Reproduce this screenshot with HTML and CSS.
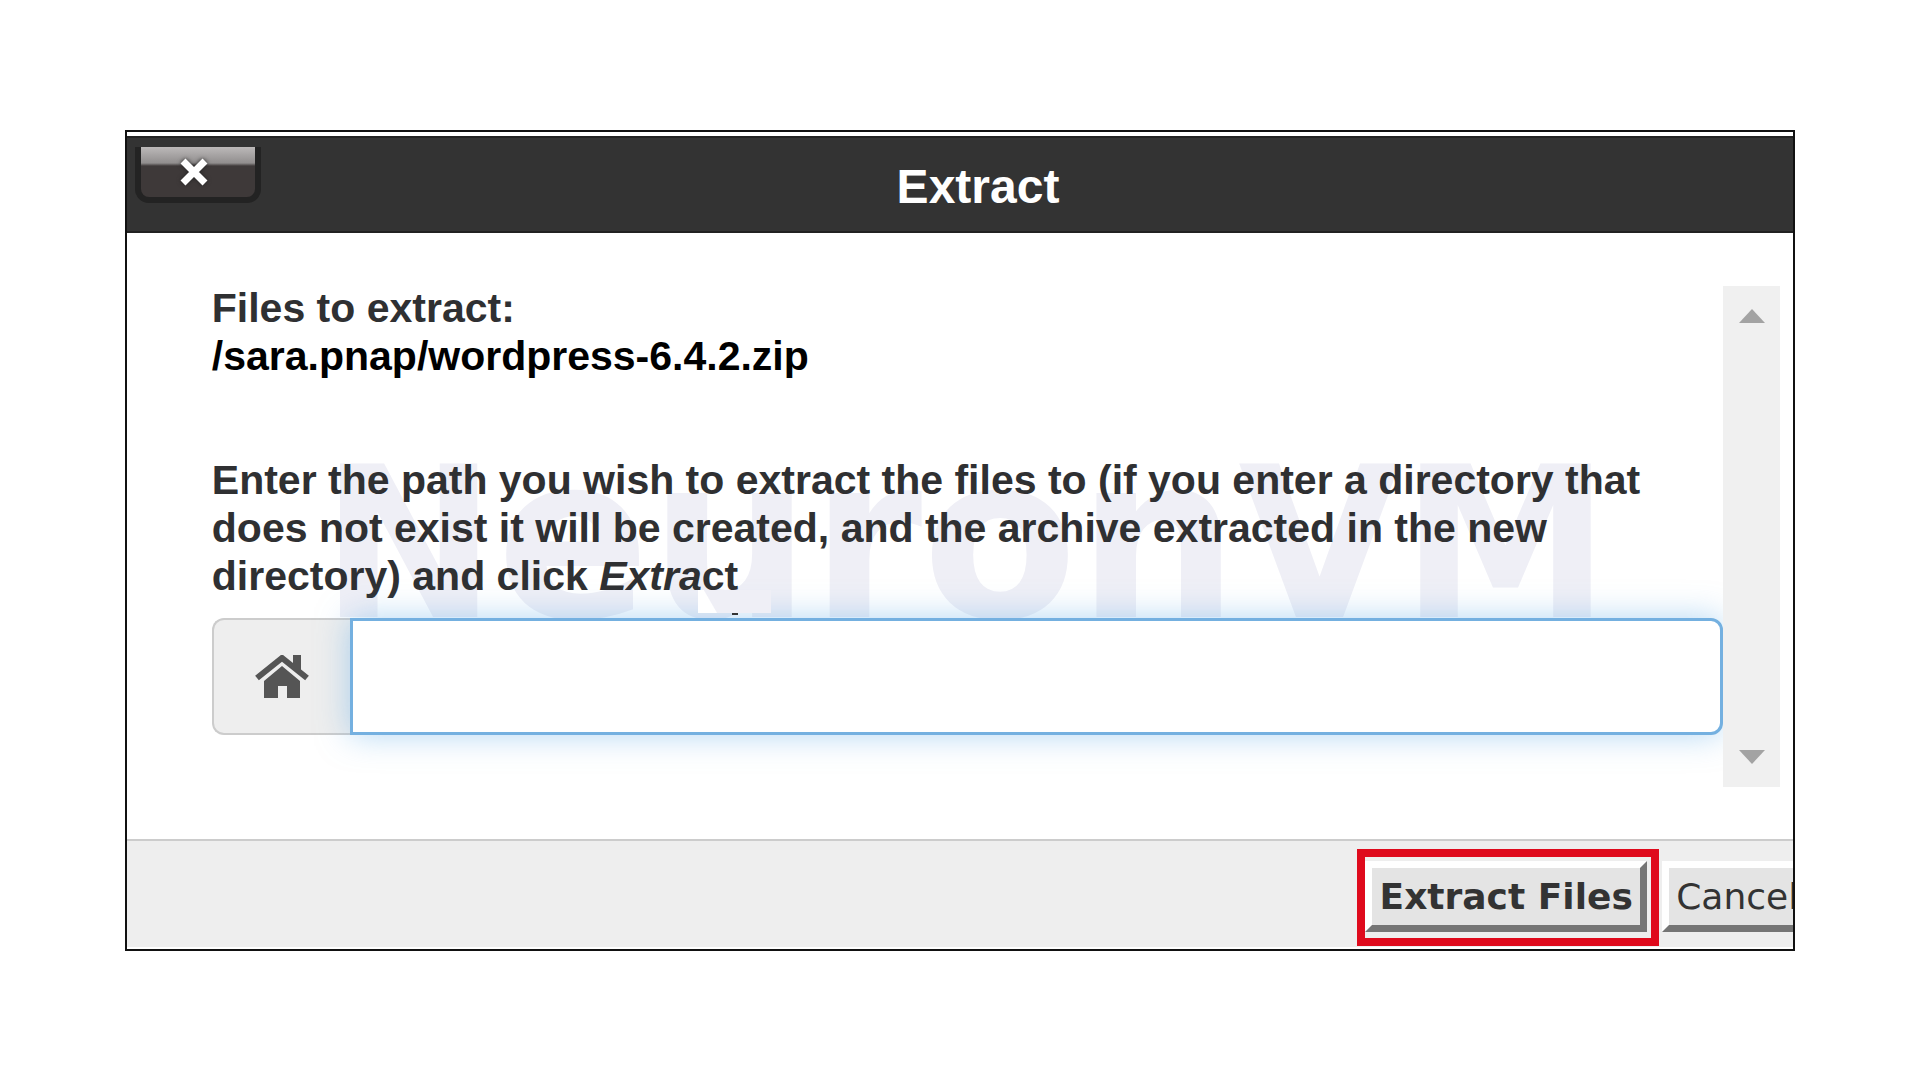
FILE: index.html
```html
<!DOCTYPE html>
<html lang="en">
<head>
<meta charset="utf-8">
<title>Extract</title>
<link rel="stylesheet" href="styles.css">
</head>
<body>
<main class="dialog" role="dialog" aria-labelledby="dialog-title">
  <header class="dialog-header">
    <button class="close" type="button" aria-label="Close">
      <svg viewBox="0 0 32 32" width="32" height="32" aria-hidden="true"><path d="M5 5 27 27M27 5 5 27"/></svg>
    </button>
    <h1 class="title" id="dialog-title">Extract</h1>
  </header>
  <section class="dialog-body">
    <div class="watermark" aria-hidden="true">N<span class="watermark-small">euron</span>VM</div>
    <div class="content">
      <p class="text">Files to extract:<br><span class="file">/sara.pnap/wordpress-6.4.2.zip</span></p>
      <label class="text prompt" for="path">Enter the path you wish to extract the files to (if you enter a directory that does not exist it will be created, and the archive extracted in the new directory) and click <i>Extra</i>ct</label>
      <div class="path-group">
        <span class="addon">
          <svg viewBox="0 0 54 44" width="54" height="44" aria-hidden="true"><path class="roof" d="M2 23 27 3 52 23"/><path d="M38 0h8v16l-8-7zM27 11 45 26v17H32V31h-9v12H9V26z"/></svg>
        </span>
        <input class="path" id="path" type="text">
        <span class="patch" aria-hidden="true"></span>
      </div>
    </div>
    <div class="scrollbar" aria-hidden="true"><span class="arrow up"></span><span class="arrow down"></span></div>
  </section>
  <footer class="dialog-footer">
    <span class="highlight"><button class="button primary" type="button">Extract Files</button></span>
    <button class="button cancel" type="button">Cancel</button>
  </footer>
</main>
</body>
</html>
```
FILE: styles.css
```css
* { box-sizing: border-box; }
body {
  margin: 0;
  padding: 130px 0;
  background: #fff;
  font-family: "Liberation Sans", Arial, sans-serif;
}
.dialog {
  width: 87%;
  margin: 0 auto;
  padding-top: 4px;
  border: 2px solid #111;
  background: #fff;
  overflow: hidden;
}
.dialog-header {
  display: flex;
  align-items: flex-start;
  height: 97px;
  padding: 9px 98px 0 8px;
  background: #333;
  border-top: 2px solid #222;
  border-bottom: 2px solid #222;
}
.close {
  display: flex;
  justify-content: center;
  align-items: flex-start;
  width: 126px;
  height: 56px;
  padding: 9px 8px 0 0;
  border: 6px solid #232323;
  border-top: 0;
  border-radius: 0 0 14px 14px;
  background: linear-gradient(#bcb9b9, #918e8e 16px, #3e3939 19px, #3e3939);
}
.close svg { fill: none; stroke: #fff; stroke-width: 7; filter: drop-shadow(0 0 2px #222); }
.title {
  flex: 1;
  margin: 12px 0 0;
  text-align: center;
  font-size: 48px;
  line-height: 56px;
  color: #fff;
}
.dialog-body {
  position: relative;
  display: flex;
  padding: 51px 13px 52px 85px;
}
.watermark {
  position: absolute;
  left: 194px;
  top: 176px;
  font: bold 210px/260px "DejaVu Sans", sans-serif;
  color: #efeff6;
  white-space: nowrap;
}
.watermark-small { font-size: 226px; }
.content {
  position: relative;
  flex: 1;
  min-width: 0;
  padding-bottom: 52px;
}
.text {
  display: block;
  margin: 0;
  font-size: 41px;
  line-height: 48px;
  font-weight: 700;
  color: #2f3032;
}
.file { color: #000; }
.prompt { margin-top: 76px; }
.path-group {
  position: relative;
  display: flex;
  margin-top: 18px;
}
.addon {
  display: flex;
  align-items: center;
  justify-content: center;
  width: 138px;
  height: 117px;
  border: 2px solid #ccc;
  border-right: 0;
  border-radius: 12px 0 0 12px;
  background: #eee;
}
.addon svg { fill: #555; }
.roof { fill: none; stroke: #555; stroke-width: 6; }
.path {
  flex: 1;
  min-width: 0;
  height: 117px;
  padding: 0 24px;
  border: 3px solid #74b0e0;
  border-radius: 0 12px 12px 0;
  background: #fff;
  font: 41px "Liberation Sans", Arial, sans-serif;
  box-shadow: 0 0 32px rgba(102, 175, 233, .5);
  outline: 0;
}
.patch {
  position: absolute;
  left: 486px;
  top: -28px;
  width: 73px;
  height: 23px;
  background: linear-gradient(60deg, #fff 16px, #efeff6 17px);
}
.patch::after {
  content: "";
  position: absolute;
  left: 34px;
  bottom: -2px;
  width: 6px;
  height: 2px;
  background: #333;
}
.scrollbar {
  position: relative;
  display: flex;
  flex-direction: column;
  justify-content: space-between;
  align-items: center;
  width: 57px;
  margin-top: 2px;
  padding: 23px 0;
  background: #f0f0f0;
}
.arrow { border: 13px solid transparent; }
.up { border-top: 0; border-bottom: 14px solid #a3a3a3; }
.down { border-bottom: 0; border-top: 14px solid #a3a3a3; }
.dialog-footer {
  display: flex;
  align-items: flex-start;
  justify-content: flex-end;
  height: 110px;
  padding-top: 8px;
  border-top: 2px solid #ccc;
  border-bottom: 2px solid #fff;
  background: #eee;
}
.highlight {
  padding: 4px 4px 6px 0;
  border: 8px solid #df0a1c;
}
.button {
  height: 71px;
  border: 7px solid;
  border-color: #fff #757575 #757575 #fff;
  background: #e4e4e4;
  font: 36px/48px "DejaVu Sans", Verdana, sans-serif;
  color: #333;
  white-space: nowrap;
}
.primary { width: 282px; padding: 0; font-weight: 700; }
.cancel {
  width: 131px;
  margin: 12px 0 0 3px;
  padding: 0 0 0 7px;
  border-right: 0;
  text-align: left;
  overflow: hidden;
}
```
